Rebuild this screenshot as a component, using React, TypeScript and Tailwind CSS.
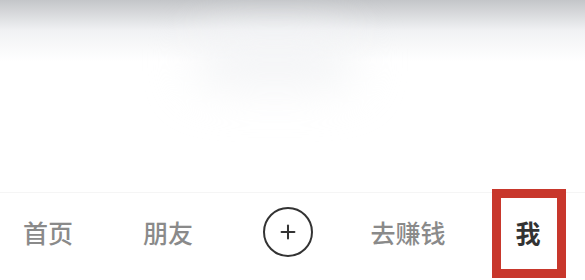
import { Plus } from "lucide-react";

const tabs = ["首页", "朋友", "+", "去赚钱", "我"];

export default function App() {
  return (
    <div
      className="flex h-[280px] w-[585px] flex-col overflow-hidden bg-white"
      style={{ fontFamily: '"Noto Sans CJK SC", "Noto Sans", sans-serif' }}
    >
      {/* blurred content above the tab bar */}
      <div className="relative h-[192px] bg-gradient-to-b from-[#c4c6c9] via-[#f1f2f4] via-[16%] to-white to-[32%]">
        <div className="absolute left-[195px] top-[35px] h-[50px] w-[160px] rounded-full bg-[#f2f3f5] blur-xl" />
      </div>

      <nav className="flex h-[88px] gap-6 border-t border-[#f5f5f5] pt-[14px]">
        {tabs.map((t) => {
          if (t === "+") {
            return (
              <div key={t} className="flex h-[50px] w-24 items-center justify-center">
                <div className="flex h-[50px] w-[50px] items-center justify-center rounded-full border-2 border-[#333]">
                  <Plus size={22} strokeWidth={2.2} className="text-[#333]" />
                </div>
              </div>
            );
          }
          const active = t === "我";
          return (
            <div key={t} className="relative flex h-[50px] w-24 items-center justify-center">
              <span
                className={
                  active
                    ? "text-[25px] font-bold leading-none text-[#333]"
                    : "text-[25px] font-medium leading-none text-[#8a8a8a]"
                }
              >
                {t}
              </span>
              {active && (
                <div className="absolute left-[12px] top-[-18px] h-[89px] w-[74px] border-[9px] border-[#c8372c]" />
              )}
            </div>
          );
        })}
      </nav>
    </div>
  );
}
